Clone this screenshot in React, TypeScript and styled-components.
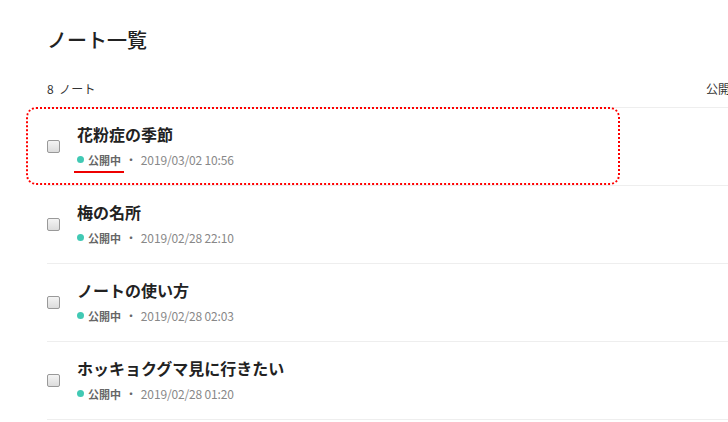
import React from 'react';
import styled, { createGlobalStyle, css } from 'styled-components';

const GlobalStyle = createGlobalStyle`
  body {
    margin: 0;
    overflow: hidden;
    background: #fff;
    font-family: "Noto Sans CJK JP", "Noto Sans", sans-serif;
    color: #222;
  }
`;

const Page = styled.main`
  padding: 24px 0 0 47px;
  width: 695px;
`;

const Heading = styled.h1`
  margin: 0;
  font-size: 20px;
  font-weight: 500;
  line-height: 32px;
  color: #222;
`;

const ListHeader = styled.div`
  display: flex;
  justify-content: space-between;
  align-items: center;
  margin-top: 13px;
  height: 38px;
  font-size: 12px;
  color: #333;
  border-bottom: 1px solid #eee;
`;

const Count = styled.span`
  word-spacing: 2px;
  letter-spacing: 0.3px;
`;

const List = styled.ul`
  margin: 0;
  padding: 0;
  list-style: none;
`;

const Row = styled.li<{ $marked?: boolean }>`
  position: relative;
  display: flex;
  align-items: center;
  gap: 17px;
  height: 77px;
  border-bottom: 1px solid #eee;

  ${(p) =>
    p.$marked &&
    css`
      &::after {
        content: '';
        position: absolute;
        left: -21px;
        top: -1px;
        width: 590px;
        height: 74px;
        border: 2px dotted #f00;
        border-radius: 10px;
      }
    `}
`;

const Check = styled.span`
  width: 11px;
  height: 11px;
  border: 1px solid #999;
  border-radius: 2px;
  background: linear-gradient(#f4f4f4, #dcdcdc);
  flex: none;
`;

const Body = styled.div`
  display: flex;
  flex-direction: column;
  gap: 5px;
  padding-bottom: 3px;
`;

const Title = styled.div`
  font-size: 16px;
  font-weight: 700;
  line-height: 24px;
  color: #222;
`;

const Meta = styled.div`
  display: flex;
  align-items: center;
  font-size: 12px;
  line-height: 18px;
  color: #888;
  letter-spacing: -0.15px;
`;

const Status = styled.span<{ $marked?: boolean }>`
  position: relative;
  display: flex;
  align-items: center;
  gap: 4px;
  font-size: 11px;
  font-weight: 700;
  color: #666;
  letter-spacing: 0;

  ${(p) =>
    p.$marked &&
    css`
      &::after {
        content: '';
        position: absolute;
        left: -3px;
        width: 50px;
        bottom: -4px;
        height: 2px;
        background: #e00;
      }
    `}
`;

const Dot = styled.span`
  width: 7px;
  height: 7px;
  border-radius: 50%;
  background: #41c9b4;
`;

const Sep = styled.span`
  margin: 0 4px 0 4px;
  color: #666;
`;

const notes = [
  { title: '花粉症の季節', date: '2019/03/02 10:56', marked: true },
  { title: '梅の名所', date: '2019/02/28 22:10' },
  { title: 'ノートの使い方', date: '2019/02/28 02:03' },
  { title: 'ホッキョクグマ見に行きたい', date: '2019/02/28 01:20' },
];

export default function App() {
  return (
    <>
      <GlobalStyle />
      <Page>
        <Heading>ノート一覧</Heading>
        <ListHeader>
          <Count>8 ノート</Count>
          <span>公開日</span>
        </ListHeader>
        <List>
          {notes.map((n) => (
            <Row key={n.title} $marked={n.marked}>
              <Check />
              <Body>
                <Title>{n.title}</Title>
                <Meta>
                  <Status $marked={n.marked}>
                    <Dot />
                    公開中
                  </Status>
                  <Sep>・</Sep>
                  {n.date}
                </Meta>
              </Body>
            </Row>
          ))}
        </List>
      </Page>
    </>
  );
}
